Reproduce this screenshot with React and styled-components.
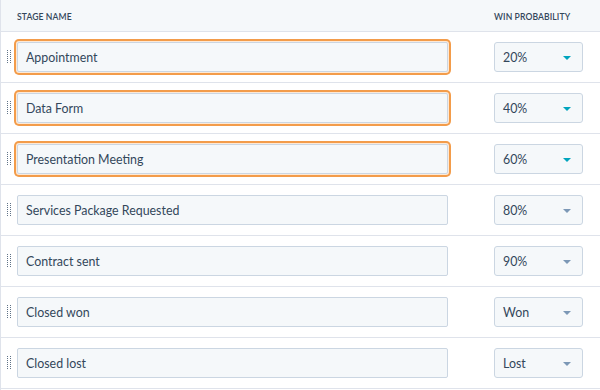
import React from 'react';
import styled, { createGlobalStyle } from 'styled-components';

const GlobalStyle = createGlobalStyle`
  html, body {
    margin: 0;
    padding: 0;
    background: #ffffff;
  }
  body {
    font-family: Lato, "Open Sans", sans-serif;
    color: #33475b;
  }
  * {
    box-sizing: border-box;
  }
`;

const Table = styled.div`
  width: 600px;
  height: 390px;
  border-left: 1px solid #dfe3eb;
  overflow: hidden;
  background: #fff;
`;

const HeaderRow = styled.div`
  display: flex;
  align-items: center;
  height: 32px;
  background: #f5f8fa;
  border-bottom: 1px solid #dfe3eb;
  padding: 2px 17px 0 16px;
`;

const HeaderCell = styled.div`
  font-size: 8.6px;
  font-weight: 600;
  letter-spacing: 0.1px;
  text-transform: uppercase;
  color: #33475b;
  width: ${p => p.width || 'auto'};
`;

const Spacer = styled.div`
  flex: 1;
`;

const Row = styled.div`
  display: flex;
  align-items: center;
  height: 51px;
  border-bottom: 1px solid #dfe3eb;
  padding: 0 17px 0 6px;
`;

const Handle = styled.svg`
  width: 4px;
  height: 14px;
  margin-right: 6px;
  flex-shrink: 0;
`;

const TextInput = styled.div`
  width: 431px;
  height: 30px;
  display: flex;
  align-items: center;
  padding-left: 8px;
  font-size: 12.4px;
  color: #33475b;
  background: #f5f8fa;
  border: 1px solid #cbd6e2;
  border-radius: 2px;
  box-shadow: ${p => (p.focused ? '0 0 0 1px #fde9d6, 0 0 0 3px #f39c4a' : 'none')};
`;

const Select = styled.div`
  width: 89px;
  height: 30px;
  display: flex;
  align-items: center;
  justify-content: space-between;
  padding: 0 11px 0 8px;
  font-size: 12.4px;
  color: #33475b;
  background: #f5f8fa;
  border: 1px solid #cbd6e2;
  border-radius: 3px;
`;

const Caret = styled.span`
  width: 0;
  height: 0;
  margin-top: 1px;
  border-left: 4px solid transparent;
  border-right: 4px solid transparent;
  border-top: 4px solid ${p => (p.active ? '#00a4bd' : '#7c98b6')};
`;

const stages = [
  { name: 'Appointment', prob: '20%', focused: true },
  { name: 'Data Form', prob: '40%', focused: true },
  { name: 'Presentation Meeting', prob: '60%', focused: true },
  { name: 'Services Package Requested', prob: '80%' },
  { name: 'Contract sent', prob: '90%' },
  { name: 'Closed won', prob: 'Won' },
  { name: 'Closed lost', prob: 'Lost' },
];

function Grip() {
  const dots = [];
  for (let r = 0; r < 7; r++) {
    for (let c = 0; c < 2; c++) {
      dots.push(<rect key={`${r}-${c}`} x={c * 3} y={r * 2} width="1" height="1" fill="#5f7287" />);
    }
  }
  return (
    <Handle viewBox="0 0 4 14" shapeRendering="crispEdges">
      {dots}
    </Handle>
  );
}

export default function App() {
  return (
    <>
      <GlobalStyle />
      <Table>
        <HeaderRow>
          <HeaderCell>Stage name</HeaderCell>
          <Spacer />
          <HeaderCell width="89px">Win probability</HeaderCell>
        </HeaderRow>
        {stages.map(s => (
          <Row key={s.name}>
            <Grip />
            <TextInput focused={s.focused}>{s.name}</TextInput>
            <Spacer />
            <Select>
              {s.prob}
              <Caret active={s.focused} />
            </Select>
          </Row>
        ))}
      </Table>
    </>
  );
}
